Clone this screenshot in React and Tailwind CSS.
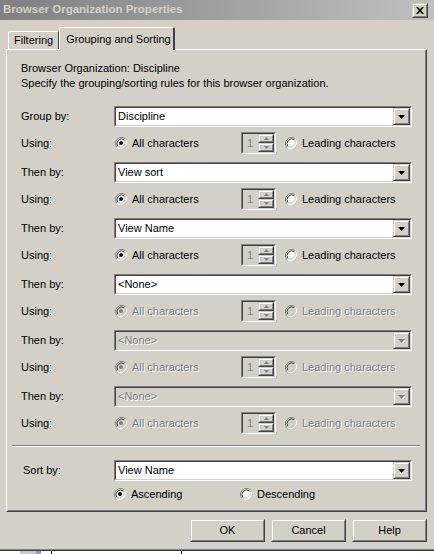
import React from 'react';

const FACE = 'bg-[#d4d0c8]';
const EMBOSS = 'text-[#808080] [text-shadow:1px_1px_0_#ffffff]';

function Arrow({ disabled }) {
  return (
    <svg width="7" height="4" viewBox="0 0 7 4" className="block">
      {disabled && <path d="M1 1h7L4.5 5z" fill="#ffffff" />}
      <path d="M0 0h7L3.5 4z" fill={disabled ? '#808080' : '#000000'} />
    </svg>
  );
}

function Sunken({ className = '', inner = '', children }) {
  return (
    <div className={`border border-t-[#808080] border-l-[#808080] border-b-white border-r-white ${className}`}>
      <div className={`h-full border border-t-[#404040] border-l-[#404040] border-b-[#d4d0c8] border-r-[#d4d0c8] ${inner}`}>
        {children}
      </div>
    </div>
  );
}

function Raised({ className = '', children }) {
  return (
    <div className={`border border-t-[#d4d0c8] border-l-[#d4d0c8] border-b-[#404040] border-r-[#404040] ${className}`}>
      <div className="h-full border border-t-white border-l-white border-b-[#808080] border-r-[#808080] flex items-center justify-center bg-[#d4d0c8]">
        {children}
      </div>
    </div>
  );
}

function Select({ value, disabled }) {
  return (
    <Sunken className="h-[21px] w-[298px]" inner={`flex items-center ${disabled ? 'bg-[#d4d0c8]' : 'bg-white'}`}>
      <span className={`flex-1 pl-[2px] leading-none ${disabled ? EMBOSS : 'text-black'}`}>{value}</span>
      <Raised className="h-[17px] w-[17px]">
        <Arrow disabled={disabled} />
      </Raised>
    </Sunken>
  );
}

function Radio({ checked, disabled, label }) {
  return (
    <label className="flex items-center gap-[5px]">
      <svg width="12" height="12" viewBox="0 0 12 12" className="block shrink-0">
        <path d="M10.2 1.8A6 6 0 0 0 1.8 10.2" fill="none" stroke="#808080" strokeWidth="1" />
        <path d="M1.8 10.2A6 6 0 0 0 10.2 1.8" fill="none" stroke="#ffffff" strokeWidth="1" />
        <circle cx="6" cy="6" r="4.5" fill={disabled ? '#d4d0c8' : '#ffffff'} />
        <path d="M9.2 2.8A4.6 4.6 0 0 0 2.8 9.2" fill="none" stroke="#404040" strokeWidth="1" />
        <path d="M2.8 9.2A4.6 4.6 0 0 0 9.2 2.8" fill="none" stroke="#d4d0c8" strokeWidth="1" />
        {checked && <circle cx="6" cy="6" r="2" fill={disabled ? '#808080' : '#000000'} />}
      </svg>
      <span className={disabled ? EMBOSS : 'text-black'}>{label}</span>
    </label>
  );
}

function Spinner() {
  return (
    <Sunken className="h-[22px] w-[35px]" inner="flex items-center bg-[#d4d0c8]">
      <span className="flex-1 pl-[4px] text-[#808080]">1</span>
      <div className="flex flex-col h-full">
        <Raised className="h-[9px] w-[16px]">
          <svg width="5" height="3" viewBox="0 0 5 3" className="block"><path d="M2.5 0L5 3H0z" fill="#808080" /></svg>
        </Raised>
        <Raised className="h-[9px] w-[16px]">
          <svg width="5" height="3" viewBox="0 0 5 3" className="block"><path d="M0 0h5L2.5 3z" fill="#808080" /></svg>
        </Raised>
      </div>
    </Sunken>
  );
}

// selectDisabled greys the dropdown too; usingDisabled only the "Using" row
function Group({ label, value, selectDisabled, usingDisabled }) {
  return (
    <div className="flex flex-col gap-[5px]">
      <div className="flex items-center">
        <span className="w-[93px]">{label}</span>
        <Select value={value} disabled={selectDisabled} />
      </div>
      <div className="flex items-center h-[22px]">
        <span className="w-[94px]">Using:</span>
        <div className="w-[126px]">
          <Radio checked disabled={usingDisabled} label="All characters" />
        </div>
        <Spinner />
        <div className="ml-[9px]">
          <Radio disabled={usingDisabled} label="Leading characters" />
        </div>
      </div>
    </div>
  );
}

const groups = [
  { label: 'Group by:', value: 'Discipline' },
  { label: 'Then by:', value: 'View sort' },
  { label: 'Then by:', value: 'View Name' },
  { label: 'Then by:', value: '<None>', usingDisabled: true },
  { label: 'Then by:', value: '<None>', selectDisabled: true, usingDisabled: true },
  { label: 'Then by:', value: '<None>', selectDisabled: true, usingDisabled: true },
];

export default function App() {
  return (
    <div className={`w-[434px] h-[554px] overflow-hidden ${FACE} font-['Liberation_Sans',Arial,sans-serif] text-[11px] text-black flex flex-col`}>
      {/* title bar */}
      <div className="h-[20px] flex items-center justify-between bg-gradient-to-r from-[#808080] to-[#c0c0c0] pl-[3px] pr-[6px]">
        <span className="font-bold text-[11.5px] text-[#d4d0c8]">Browser Organization Properties</span>
        <Raised className="h-[15px] w-[16px]">
          <svg width="8" height="7" viewBox="0 0 8 7" className="block">
            <path d="M0 0h2l2 2.5L6 0h2L5 3.5 8 7H6L4 4.5 2 7H0l3-3.5z" fill="#000" />
          </svg>
        </Raised>
      </div>

      {/* tabs */}
      <div className="flex items-end pl-[6px] h-[29px]">
        <div className="ml-[2px] h-[18px] px-[5px] flex items-center whitespace-nowrap border-l border-t border-white border-r border-r-[#404040] rounded-tl-[2px]">
          Filtering
        </div>
        <div className="relative z-10 -mb-[1px] h-[23px] w-[116px] pl-[6px] pt-[3px] whitespace-nowrap bg-[#d4d0c8] border-l border-t border-white border-r-2 border-r-[#404040] rounded-t-[2px]">
          Grouping and Sorting
        </div>
      </div>

      {/* panel */}
      <div className="ml-[6px] w-[421px] h-[463px] border border-t-white border-l-white border-b-[#404040] border-r-[#404040]">
        <div className="h-full border border-t-[#d4d0c8] border-l-[#d4d0c8] border-b-[#808080] border-r-[#808080] pl-[13px] pt-[10px] flex flex-col">
          <p className="leading-[15px]">Browser Organization: Discipline</p>
          <p className="leading-[15px]">Specify the grouping/sorting rules for this browser organization.</p>

          <div className="mt-[15px] flex flex-col gap-[8px]">
            {groups.map((g, i) => (
              <Group key={i} {...g} />
            ))}
          </div>

          <div className="mt-[11px] -ml-[9px] w-[408px] h-[2px] border-t border-t-[#808080] border-b border-b-white" />

          <div className="mt-[13px] flex items-center">
            <span className="w-[93px] pl-[2px]">Sort by:</span>
            <Select value="View Name" />
          </div>
          <div className="mt-[4px] ml-[93px] flex items-center h-[18px]">
            <div className="w-[126px]">
              <Radio checked label="Ascending" />
            </div>
            <Radio label="Descending" />
          </div>
        </div>
      </div>

      {/* buttons */}
      <div className="mt-[7px] flex justify-end gap-[6px] pr-[7px]">
        {['OK', 'Cancel', 'Help'].map(b => (
          <Raised key={b} className="h-[23px] w-[75px]">
            <span>{b}</span>
          </Raised>
        ))}
      </div>

      <div className="mt-[7px] h-[1px] bg-[#808080]" />
      <div className="h-[1px] bg-[#404040]" />
      <div className="flex-1 bg-white flex">
        <div className="ml-[20px] w-[16px] bg-[#c8c8c8]" />
        <div className="w-[5px] bg-[#a0a0a0]" />
        <div className="ml-[10px] w-[1px] bg-black" />
        <div className="ml-[129px] w-[1px] bg-black" />
      </div>
    </div>
  );
}
